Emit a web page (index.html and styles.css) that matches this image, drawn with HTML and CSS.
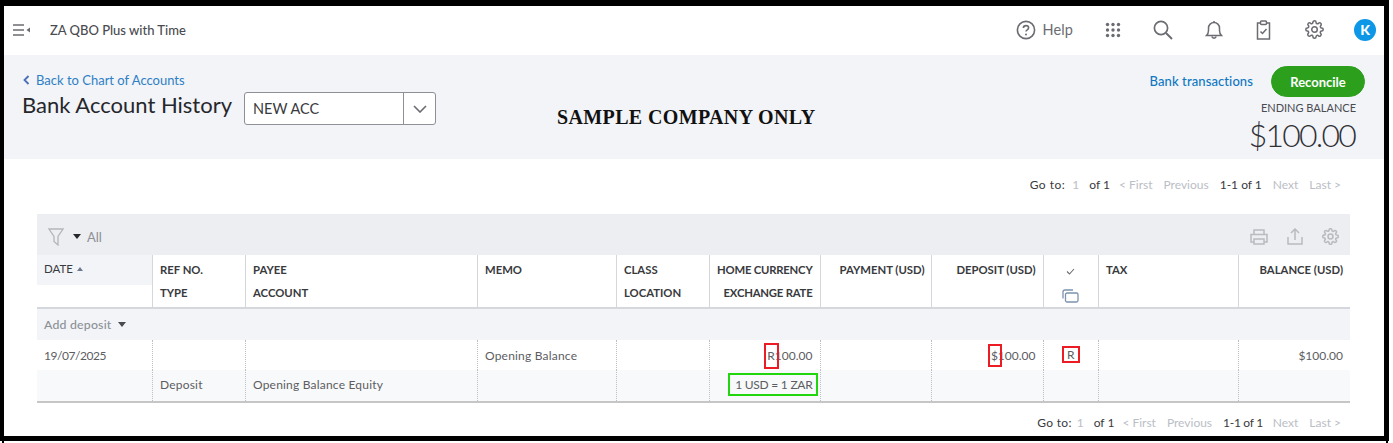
FILE: index.html
```html
<!DOCTYPE html>
<html lang="en">
<head>
<meta charset="utf-8">
<title>Bank Account History</title>
<link rel="stylesheet" href="styles.css">
</head>
<body>
<div class="frame">
  <header class="topbar">
    <div class="brand">
      <svg class="menu-icon" width="18" height="14" viewBox="0 0 18 14"><path d="M0 2h11M0 7h11M0 12h11" stroke="#6b6c72" stroke-width="1.6" fill="none"/><path d="M17 4.500v5L13.500 7z" fill="#6b6c72"/></svg>
      <span class="company">ZA QBO Plus with Time</span>
    </div>
    <nav class="tools">
      <div class="help">
        <svg width="20" height="20" viewBox="0 0 20 20"><circle cx="10" cy="10" r="8.600" fill="none" stroke="#6b6c72" stroke-width="1.600"/><path d="M7.400 8c0-1.500 1.100-2.400 2.600-2.400s2.600.9 2.600 2.200c0 2-2.600 2-2.600 3.800" fill="none" stroke="#6b6c72" stroke-width="1.600"/><circle cx="10" cy="14.400" r="1" fill="#6b6c72"/></svg>
        <span>Help</span>
      </div>
      <svg class="tool" width="16" height="16" viewBox="0 0 16 16" fill="#6b6c72"><circle cx="2.500" cy="2.500" r="1.700"/><circle cx="8" cy="2.500" r="1.700"/><circle cx="13.500" cy="2.500" r="1.700"/><circle cx="2.500" cy="8" r="1.700"/><circle cx="8" cy="8" r="1.700"/><circle cx="13.500" cy="8" r="1.700"/><circle cx="2.500" cy="13.500" r="1.700"/><circle cx="8" cy="13.500" r="1.700"/><circle cx="13.500" cy="13.500" r="1.700"/></svg>
      <svg class="tool" width="20" height="20" viewBox="0 0 20 20" fill="none" stroke="#6b6c72" stroke-width="1.700"><circle cx="8" cy="8" r="6.600"/><path d="M13 13l6 6" stroke-width="2"/></svg>
      <svg class="tool" width="18" height="20" viewBox="0 0 18 20" fill="none" stroke="#6b6c72" stroke-width="1.500"><path d="M1.500 15.500c1.500-1.500 2-2.500 2-5V8a5.500 5.500 0 0 1 11 0v2.500c0 2.500.5 3.500 2 5z"/><path d="M9 1v1.500M6.800 16.500a2.300 2.300 0 0 0 4.400 0"/></svg>
      <svg class="tool tool-clip" width="15" height="20" viewBox="0 0 15 20" fill="none" stroke="#6b6c72" stroke-width="1.500"><path d="M4 3H1.500v16h12V3H11"/><rect x="4.500" y="1" width="6" height="3.500" rx="1"/><path d="M4.500 11.500l2 2 4-4.500"/></svg>
      <svg class="tool tool-gear" width="19" height="19" viewBox="0 0 24 24" fill="none" stroke="#6b6c72" stroke-width="1.900"><circle cx="12" cy="12" r="3.500"/><path d="M19.400 15a1.700 1.700 0 0 0 .3 1.800l.1.100a2 2 0 1 1-2.900 2.900l-.1-.1a1.700 1.700 0 0 0-2.800 1.200V21a2 2 0 1 1-4 0v-.1a1.700 1.700 0 0 0-2.900-1.200l-.1.100a2 2 0 1 1-2.900-2.900l.1-.1a1.700 1.700 0 0 0-1.200-2.800H3a2 2 0 1 1 0-4h.1a1.700 1.700 0 0 0 1.200-2.900l-.1-.1a2 2 0 1 1 2.900-2.900l.1.100a1.700 1.700 0 0 0 1.800.3H9a1.700 1.700 0 0 0 1-1.500V3a2 2 0 1 1 4 0v.1a1.700 1.700 0 0 0 2.900 1.200l.1-.1a2 2 0 1 1 2.900 2.900l-.1.100a1.700 1.700 0 0 0-.3 1.800V9a1.700 1.700 0 0 0 1.500 1H21a2 2 0 1 1 0 4h-.1a1.700 1.700 0 0 0-1.500 1z"/></svg>
      <span class="avatar">K</span>
    </nav>
  </header>

  <section class="hero">
    <div class="hero-left">
      <a class="back"><svg width="7" height="10" viewBox="0 0 7 10"><path d="M5.500 1L1.500 5l4 4" fill="none" stroke="#4a6fb5" stroke-width="1.800"/></svg>Back to Chart of Accounts</a>
      <div class="title-row">
        <h1>Bank Account History</h1>
        <div class="picker">
          <span class="picker-value">NEW ACC</span>
          <span class="picker-btn"><svg width="14" height="8" viewBox="0 0 14 8"><path d="M1 1l6 6 6-6" fill="none" stroke="#6b6c72" stroke-width="1.600"/></svg></span>
        </div>
      </div>
    </div>
    <div class="sample">SAMPLE COMPANY ONLY</div>
    <div class="hero-right">
      <div class="actions">
        <a class="bank-link">Bank transactions</a>
        <button class="reconcile">Reconcile</button>
      </div>
      <div class="ending-label">ENDING BALANCE</div>
      <div class="ending-value">$100.00</div>
    </div>
  </section>

  <main class="content">
    <div class="pager pager-top">
      <span class="goto">Go to:</span><span class="muted num">1</span><span class="of">of 1</span><span class="muted">&lt; First</span><span class="muted">Previous</span><span class="count">1-1 of 1</span><span class="muted">Next</span><span class="muted">Last &gt;</span>
    </div>

    <div class="table-tools">
      <div class="filter">
        <svg width="16" height="18" viewBox="0 0 16 18"><path d="M1 1h14L10 8.500V17L6 13.500V8.500z" fill="none" stroke="#b4b6ba" stroke-width="1.300"/></svg>
        <span class="caret"></span>
        <span class="filter-label">All</span>
      </div>
      <div class="table-icons">
        <svg width="18" height="16" viewBox="0 0 18 16" fill="none" stroke="#b9bbc0" stroke-width="1.500"><path d="M4 5V1h10v4M4 13H1V5.500h16V13h-3"/><rect x="4" y="10" width="10" height="5"/></svg>
        <svg width="16" height="17" viewBox="0 0 16 17" fill="none" stroke="#b9bbc0" stroke-width="1.500"><path d="M8 12V1.500M4 5l4-4 4 4M1 9v7h14V9"/></svg>
        <svg width="17" height="17" viewBox="0 0 24 24" fill="none" stroke="#b9bbc0" stroke-width="2.200"><circle cx="12" cy="12" r="3.500"/><path d="M19.400 15a1.700 1.700 0 0 0 .3 1.800l.1.100a2 2 0 1 1-2.900 2.900l-.1-.1a1.700 1.700 0 0 0-2.800 1.200V21a2 2 0 1 1-4 0v-.1a1.700 1.700 0 0 0-2.900-1.200l-.1.100a2 2 0 1 1-2.900-2.900l.1-.1a1.700 1.700 0 0 0-1.200-2.800H3a2 2 0 1 1 0-4h.1a1.700 1.700 0 0 0 1.200-2.900l-.1-.1a2 2 0 1 1 2.900-2.900l.1.100a1.700 1.700 0 0 0 1.800.3H9a1.700 1.700 0 0 0 1-1.500V3a2 2 0 1 1 4 0v.1a1.700 1.700 0 0 0 2.900 1.200l.1-.1a2 2 0 1 1 2.900 2.900l-.1.100a1.700 1.700 0 0 0-.3 1.800V9a1.700 1.700 0 0 0 1.500 1H21a2 2 0 1 1 0 4h-.1a1.700 1.700 0 0 0-1.500 1z"/></svg>
      </div>
    </div>

    <table class="ledger">
      <colgroup>
        <col class="c-date"><col class="c-ref"><col class="c-payee"><col class="c-memo"><col class="c-class"><col class="c-home"><col class="c-pay"><col class="c-dep"><col class="c-chk"><col class="c-tax"><col class="c-bal">
      </colgroup>
      <thead>
        <tr>
          <th class="date-head"><div class="date-sort">DATE <span class="sort-up"></span></div></th>
          <th><div>REF NO.</div><div>TYPE</div></th>
          <th><div>PAYEE</div><div>ACCOUNT</div></th>
          <th><div>MEMO</div></th>
          <th><div>CLASS</div><div>LOCATION</div></th>
          <th class="right home-head"><div>HOME CURRENCY</div><div>EXCHANGE RATE</div></th>
          <th class="right pay-head"><div>PAYMENT (USD)</div></th>
          <th class="right"><div>DEPOSIT (USD)</div></th>
          <th class="center">
            <div><svg width="9" height="7" viewBox="0 0 9 7"><path d="M1 3.500l2.500 2.500L8 1" fill="none" stroke="#6b6c72" stroke-width="1.100"/></svg></div>
            <div><svg class="copy-icon" width="17" height="14" viewBox="0 0 17 14" fill="none" stroke="#7d93ad" stroke-width="1.300"><rect x="3.500" y="4" width="12.500" height="9" rx="1.500"/><path d="M1 9.500V3a2 2 0 0 1 2-2h8"/></svg></div>
          </th>
          <th><div>TAX</div></th>
          <th class="right"><div>BALANCE (USD)</div></th>
        </tr>
      </thead>
      <tbody>
        <tr class="add-row"><td colspan="11">Add deposit <span class="caret caret-soft"></span></td></tr>
        <tr class="row-a">
          <td class="tight">19/07/2025</td><td></td><td></td><td>Opening Balance</td><td></td>
          <td class="right tight"><span class="mark mark-home">R</span>100.00</td>
          <td></td>
          <td class="right tight"><span class="mark mark-dep">$</span>100.00</td>
          <td class="center"><span class="mark mark-box">R</span></td>
          <td></td>
          <td class="right tight">$100.00</td>
        </tr>
        <tr class="row-b">
          <td></td><td>Deposit</td><td>Opening Balance Equity</td><td></td><td></td>
          <td class="right"><span class="rate">1 USD = 1 ZAR</span></td>
          <td></td><td></td><td></td><td></td><td></td>
        </tr>
      </tbody>
    </table>

    <div class="pager pager-bottom">
      <span class="goto">Go to:</span><span class="muted num">1</span><span class="of">of 1</span><span class="muted">&lt; First</span><span class="muted">Previous</span><span class="count">1-1 of 1</span><span class="muted">Next</span><span class="muted">Last &gt;</span>
    </div>
  </main>
</div>
</body>
</html>
```
FILE: styles.css
```css
* { box-sizing: border-box; }
html, body { margin: 0; padding: 0; background: #fff; }
body { position: relative; width: 1393px; height: 443px; overflow: hidden; font-family: Lato, "Noto Sans", sans-serif; color: #393a3d; }
body::before, body::after { content: ""; position: absolute; top: 441px; width: 2px; height: 2px; background: #000; }
body::before { left: 2px; }
body::after { left: 1386px; }
.frame { width: 1389px; height: 441px; border: solid #000; border-width: 6px 5px 5px 4px; background: #fff; overflow: hidden; }

.topbar { height: 49px; display: flex; justify-content: space-between; align-items: center; padding: 0 8px 2px 9px; }
.brand { display: flex; align-items: center; gap: 19px; }
.company { font-size: 13px; font-weight: 500; color: #4a4b50; }
.tools { display: flex; align-items: center; gap: 32px; }
.tool-clip { margin-left: 1px; }
.tool-gear { margin-left: 2px; }
.help { display: flex; align-items: center; gap: 7px; font-size: 14.500px; color: #6b6c72; letter-spacing: .1px; }
.avatar { width: 22px; height: 22px; border-radius: 50%; background: #0d97e6; color: #fff; font-size: 14px; font-weight: 900; display: flex; align-items: center; justify-content: center; margin-left: -2px; }

.hero { height: 104px; background: #f2f4f8; position: relative; display: flex; justify-content: space-between; padding: 17px 24px 0 19px; }
.back { display: flex; align-items: center; gap: 6px; font-size: 13px; color: #2e7fc4; }
.title-row { display: flex; align-items: flex-start; gap: 12px; margin-top: 2px; margin-left: -1px; }
h1 { margin: 0; font-size: 22px; font-weight: 400; line-height: 30px; color: #26272b; }
.picker { width: 192px; height: 33px; margin-top: 2px; display: flex; background: #fff; border: 1px solid #8d9096; border-radius: 3px; }
.picker-value { flex: 1; font-size: 14.500px; line-height: 31px; padding-left: 8px; color: #393a3d; }
.picker-btn { width: 32px; border-left: 1px solid #8d9096; display: flex; align-items: center; justify-content: center; }
.sample { position: absolute; left: 553px; top: 50px; font-family: "Liberation Serif", serif; font-weight: 700; font-size: 20px; letter-spacing: .37px; line-height: 24px; color: #111; white-space: nowrap; }
.hero-right { display: flex; flex-direction: column; align-items: flex-end; margin-top: -6px; margin-right: 3px; }
.actions { display: flex; align-items: center; gap: 18px; margin-right: -8px; }
.bank-link { font-size: 13px; font-weight: 500; color: #0f77c2; margin-top: -2px; letter-spacing: .1px; }
.reconcile { width: 94px; height: 31px; border: 1px solid #2ca01c; border-radius: 16px; background: #2ca01c; color: #fff; font: 700 13px Lato, sans-serif; padding: 0; }
.ending-label { font-size: 11px; line-height: 16px; margin: 3px 1px 0 0; color: #4a4b50; }
.ending-value { font-size: 32px; font-weight: 300; letter-spacing: -1.800px; line-height: 38px; margin-right: 2px; color: #2f3034; }

.content { padding: 0 34px 0 33px; }
.pager { display: flex; justify-content: flex-end; gap: 11px; font-size: 12px; color: #393a3d; }
.pager-top { height: 55px; padding: 18px 9px 0 0; line-height: 16px; }
.pager-bottom { height: 32px; padding: 12px 9px 0 0; line-height: 16px; }
.muted { color: #babec5; }
.goto { letter-spacing: .5px; margin-right: -3px; }
.num { margin: 0 -1px; }
.of { margin-right: -2px; }
.pager-bottom .count { letter-spacing: -.3px; margin-right: -1px; }
.pager-bottom .of { margin-right: -3px; }
.pager-bottom .goto { letter-spacing: .3px; margin-right: -5px; }

.table-tools { height: 41px; background: #eceef1; display: flex; justify-content: space-between; align-items: center; padding: 4px 11px 0 11px; }
.filter { display: flex; align-items: center; gap: 9px; font-size: 13px; color: #8d9096; }
.filter-label { margin-left: -3px; }
.caret { display: inline-block; width: 0; height: 0; border: 4px solid transparent; border-top: 5px solid #26272b; border-bottom: 0; }
.caret-soft { border-top-color: #4a4b50; margin-left: 3px; vertical-align: 2px; }
.table-icons { display: flex; align-items: center; gap: 19px; }

.ledger { width: 1313px; table-layout: fixed; border-collapse: collapse; font-size: 12px; }
.c-date { width: 115px; } .c-ref { width: 93px; } .c-payee { width: 232px; } .c-memo { width: 139px; }
.c-class { width: 93px; } .c-home { width: 111px; } .c-pay { width: 111px; } .c-dep { width: 112px; }
.c-chk { width: 55px; } .c-tax { width: 140px; } .c-bal { width: 112px; }
th { height: 53px; padding: 3px 7px 0 7.500px; vertical-align: top; text-align: left; font-size: 11.300px; font-weight: 700; color: #393a3d; background: #fff; border-left: 1px solid #d4d7dc; border-bottom: 2px solid #d4d7dc; white-space: nowrap; }
th:first-child { border-left: 0; }
th > div { height: 23px; line-height: 23px; }
th.date-head { padding: 0; font-weight: 400; }
.date-sort { background: #f2f4f8; height: 30px !important; line-height: 28px; padding: 0 0 0 7px; font-size: 11.500px; color: #393a3d; }
.sort-up { display: inline-block; width: 0; height: 0; border: 3px solid transparent; border-bottom: 4px solid #6b7a90; border-top: 0; margin-left: 1px; vertical-align: 2px; }
.right { text-align: right; }
.center { text-align: center; }
th.center svg { display: inline-block; vertical-align: middle; }
.copy-icon { margin-top: 3px; }
th.right { padding-right: 7px; padding-left: 0; }
th.home-head { letter-spacing: -.2px; }
th.pay-head { padding-right: 6px; }

.add-row td { height: 32px; background: #f2f4f8; padding: 0 7px; color: #8d9096; font-size: 12.300px; font-weight: 500; letter-spacing: .2px; }
td { padding: 0 7px 0 7.500px; font-size: 12px; color: #5c5d62; letter-spacing: .2px; border-left: 1px dotted #bcbfc5; white-space: nowrap; }
td:first-child { border-left: 0; padding-left: 7px; }
td.tight { letter-spacing: 0; }
td.tight:first-child { letter-spacing: -.45px; }
.row-a td { height: 30px; background: #fff; }
.row-b td { height: 32px; background: #f8f9fa; border-bottom: 2px solid #c6c6c6; padding-bottom: 2px; }

.mark { display: inline-block; position: relative; }
.mark-home::after, .mark-dep::after { content: ""; position: absolute; border: 2px solid #ec1c24; }
.mark-home::after { left: -3px; right: -4px; top: -5px; bottom: -6px; }
.mark-dep::after { left: -3px; right: -4px; top: -4px; bottom: -4px; }
.mark-box { width: 18px; height: 17px; line-height: 13px; border: 2px solid #ec1c24; text-align: center; letter-spacing: 0; margin-bottom: 2px; }
.rate { display: inline-block; border: 2px solid #22d60e; height: 23px; line-height: 19px; padding: 0 3px 0 5px; margin-right: -5px; letter-spacing: -.25px; }
```
